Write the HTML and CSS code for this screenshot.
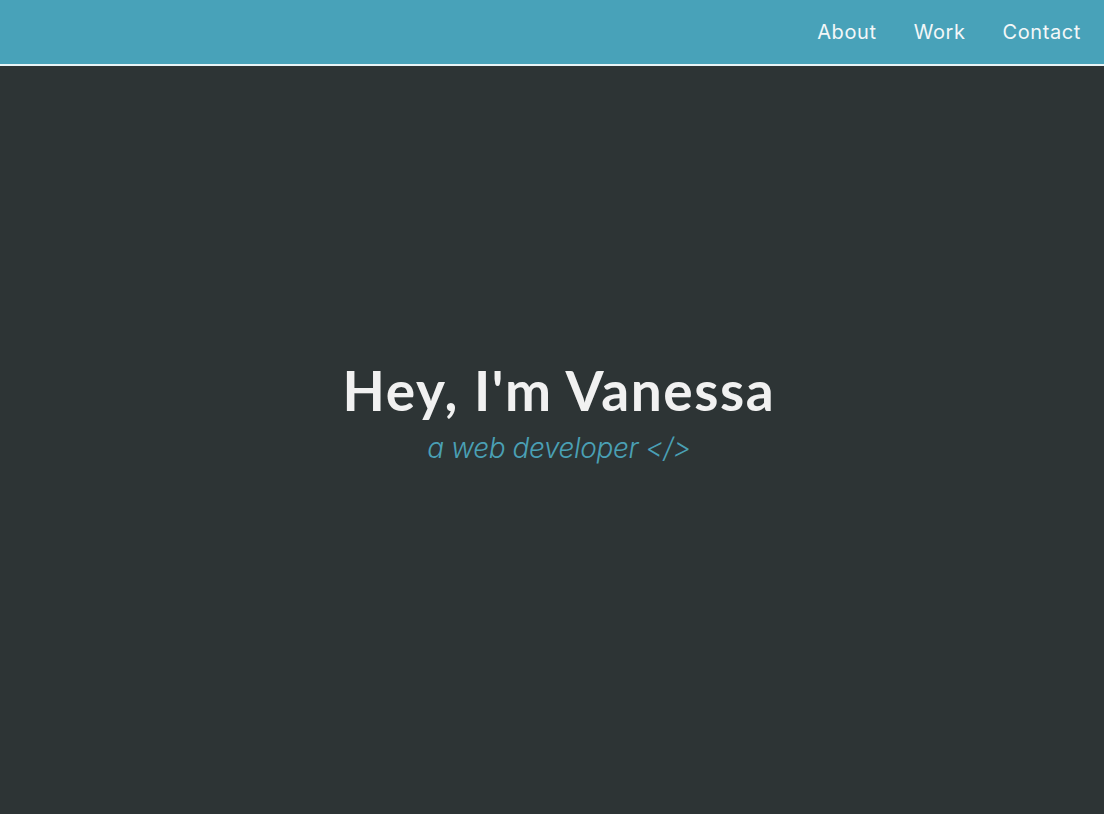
FILE: index.html
```html
<!DOCTYPE html>
<html lang="en">
<head>
<meta charset="utf-8">
<title>Vanessa</title>
<link rel="stylesheet" href="styles.css">
</head>
<body>
<header class="nav">
  <ul class="nav-list">
    <li><a href="#about">About</a></li>
    <li><a href="#work">Work</a></li>
    <li><a href="#contact">Contact</a></li>
  </ul>
</header>
<section class="welcome">
  <h1 class="title">Hey, I'm Vanessa</h1>
  <p class="subtitle">a web developer &lt;/&gt;</p>
</section>
</body>
</html>
```
FILE: styles.css
```css
* { box-sizing: border-box; }
html, body { margin: 0; padding: 0; }
body {
  background: #2d3435;
  font-family: "Open Sans", "Liberation Sans", sans-serif;
  color: #f1f1f1;
}
.nav {
  height: 66px;
  background: #48a2b9;
  border-bottom: 2px solid #e8f4f6;
  display: flex;
  justify-content: flex-end;
  align-items: center;
}
.nav-list {
  list-style: none;
  margin: 0;
  padding: 0 23px 0 0;
  display: flex;
  gap: 37px;
}
.nav-list a {
  color: #f3f7f8;
  text-decoration: none;
  font-family: "Inter", sans-serif;
  font-size: 20px;
  font-weight: 400;
  letter-spacing: 0.6px;
}
.welcome {
  height: 748px;
  display: flex;
  flex-direction: column;
  align-items: center;
  justify-content: center;
  padding: 0 0 55px 14px;
}
.title {
  margin: 0 0 11px;
  font-family: "Lato", sans-serif;
  font-weight: 700;
  font-size: 55px;
  color: #f1f1f1;
  line-height: 1.1;
  letter-spacing: 1.6px;
}
.subtitle {
  margin: 0;
  font-family: "Inter", sans-serif;
  font-style: italic;
  font-size: 28px;
  font-weight: 300;
  color: #4aa0b5;
  letter-spacing: -0.4px;
}
```
